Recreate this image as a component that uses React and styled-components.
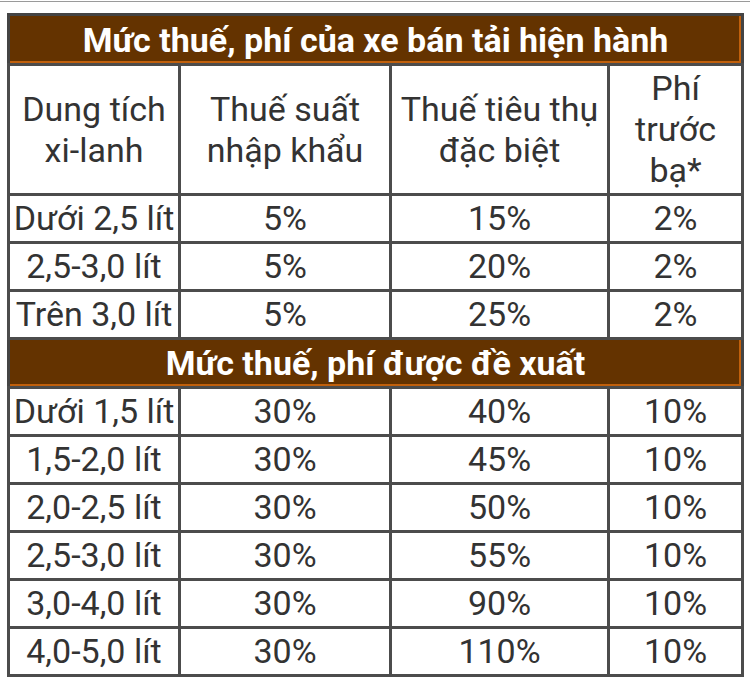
import React from 'react';
import styled, { createGlobalStyle } from 'styled-components';

const Global = createGlobalStyle`
  body {
    margin: 0;
    background: #fff;
    font-family: Roboto, "Liberation Sans", sans-serif;
  }
`;

const Page = styled.div`
  width: 750px;
  height: 683px;
  border-top: 1px solid #9a9a9a;
  margin-top: 1px;
  padding: 11px 0 0 7px;
  box-sizing: border-box;
  background: #fff;
`;

const Table = styled.table`
  width: 734px;
  border-collapse: collapse;
  table-layout: fixed;
  border: 3px solid #444;
  color: #333;
`;

const Title = styled.td`
  background: #643300;
  color: #fff;
  font-weight: 700;
  font-size: 34px;
  text-align: center;
  height: ${(p) => p.h}px;
  padding: 0;
  border: 2px solid #555;
  box-shadow: inset -2px -2px 0 #c0600c;
  line-height: 1;
`;

const Cell = styled.td`
  border: 3px solid #4c4c4c;
  text-align: center;
  font-size: 34px;
  line-height: 41px;
  padding: 0;
  height: ${(p) => p.h || 45}px;
  white-space: nowrap;
`;

const HeadCell = styled(Cell)`
  white-space: normal;
  line-height: 41px;
`;

const current = [
  ['Dưới 2,5 lít', '5%', '15%', '2%'],
  ['2,5-3,0 lít', '5%', '20%', '2%'],
  ['Trên 3,0 lít', '5%', '25%', '2%'],
];

const proposed = [
  ['Dưới 1,5 lít', '30%', '40%', '10%'],
  ['1,5-2,0 lít', '30%', '45%', '10%'],
  ['2,0-2,5 lít', '30%', '50%', '10%'],
  ['2,5-3,0 lít', '30%', '55%', '10%'],
  ['3,0-4,0 lít', '30%', '90%', '10%'],
  ['4,0-5,0 lít', '30%', '110%', '10%'],
];

const DataRow = ({ row }) => (
  <tr>
    {row.map((c, i) => (
      <Cell key={i}>{c}</Cell>
    ))}
  </tr>
);

export default function App() {
  return (
    <Page>
      <Global />
      <Table>
        <colgroup>
          <col style={{ width: '171px' }} />
          <col style={{ width: '211px' }} />
          <col style={{ width: '218px' }} />
          <col style={{ width: '134px' }} />
        </colgroup>
        <tbody>
          <tr>
            <Title colSpan={4} h={47}>
              Mức thuế, phí của xe bán tải hiện hành
            </Title>
          </tr>
          <tr>
            <HeadCell h={127}>
              Dung tích
              <br />
              xi-lanh
            </HeadCell>
            <HeadCell h={127}>
              Thuế suất
              <br />
              nhập khẩu
            </HeadCell>
            <HeadCell h={127}>
              Thuế tiêu thụ
              <br />
              đặc biệt
            </HeadCell>
            <HeadCell h={127}>
              Phí
              <br />
              trước
              <br />
              bạ*
            </HeadCell>
          </tr>
          {current.map((r, i) => (
            <DataRow key={i} row={r} />
          ))}
          <tr>
            <Title colSpan={4} h={46}>
              Mức thuế, phí được đề xuất
            </Title>
          </tr>
          {proposed.map((r, i) => (
            <DataRow key={i} row={r} />
          ))}
        </tbody>
      </Table>
    </Page>
  );
}
